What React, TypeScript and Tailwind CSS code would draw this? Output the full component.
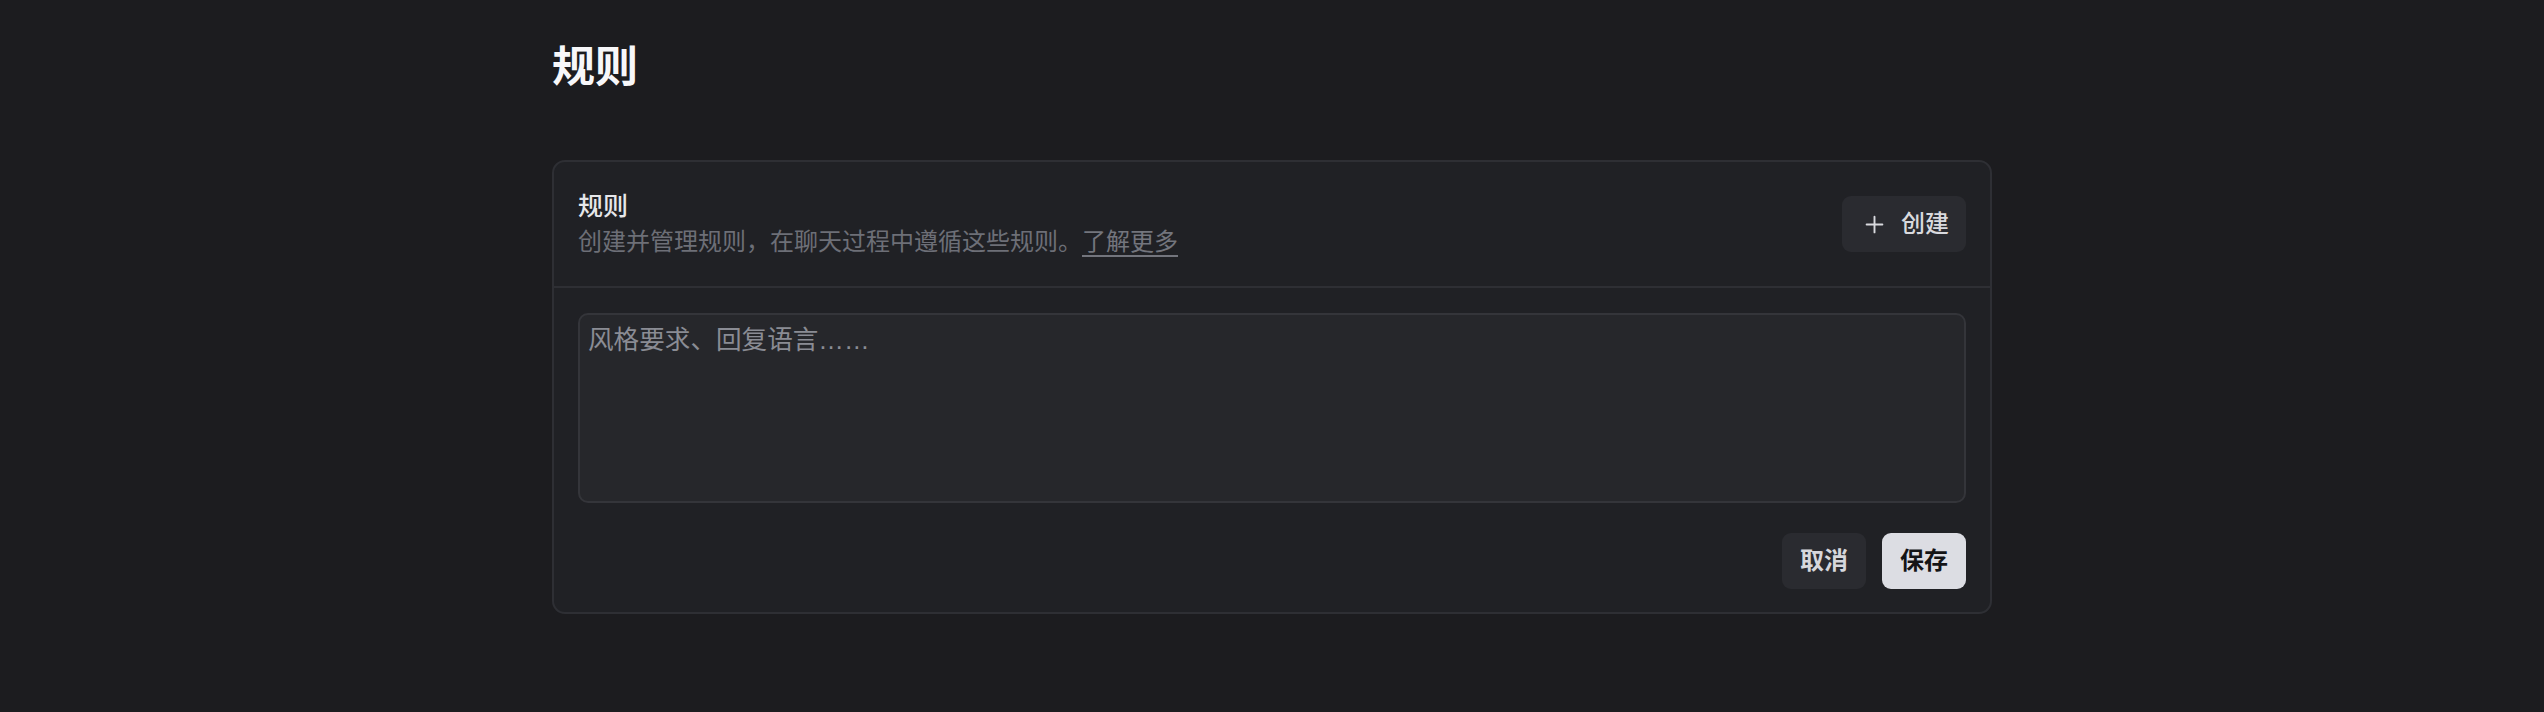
import React, { useState } from 'react'
import { Plus } from 'lucide-react'

export default function App() {
  const [rules, setRules] = useState('')

  return (
    <div
      className="min-h-[712px] w-full bg-[#1c1c1f] text-[#f4f4f6]"
      style={{ fontFamily: '"Liberation Sans", "Noto Sans CJK SC", sans-serif' }}
    >
      <div className="mx-auto w-[1440px] pt-[41px]">
        {/* Page title */}
        <h1 className="text-[43px] leading-[52px] font-bold text-[#f7f7f9]">规则</h1>

        {/* Rules card */}
        <div className="mt-[67px] rounded-[13px] border-2 border-[#2e2f34] bg-[#202125]">
          {/* Header */}
          <div className="flex items-center justify-between px-[24px] py-[26px] border-b-2 border-[#2e2f34]">
            <div className="flex flex-col">
              <span className="text-[25px] leading-[36px] font-medium text-[#e6e7ea]">规则</span>
              <span className="text-[24px] leading-[36px] text-[#6d6f77]">
                创建并管理规则，在聊天过程中遵循这些规则。
                <a href="#" className="underline underline-offset-[5px] decoration-[1.5px] text-[#73757d]">
                  了解更多
                </a>
              </span>
            </div>
            <button className="flex items-center gap-[13px] h-[56px] pl-[19px] pr-[17px] rounded-[9px] bg-[#2a2b30] text-[24px] font-medium text-[#d9dade]">
              <Plus className="w-[27px] h-[27px]" strokeWidth={1.7} />
              <span>创建</span>
            </button>
          </div>

          {/* Body */}
          <div className="flex flex-col px-[24px] pt-[25px] pb-[23px]">
            <textarea
              autoFocus
              value={rules}
              onChange={(e) => setRules(e.target.value)}
              placeholder="风格要求、回复语言……"
              className="h-[190px] w-full resize-none rounded-[10px] border-2 border-[#34353a] bg-[#26272b] px-[8px] py-[6px] text-[25.6px] leading-[38px] text-[#e6e7ea] placeholder:text-[#8a8c94] outline-none"
            />
            <div className="mt-[30px] flex justify-end gap-[16px]">
              <button className="h-[56px] w-[84px] rounded-[9px] bg-[#2a2b30] text-[24px] font-semibold text-[#d6d7dc]">
                取消
              </button>
              <button className="h-[56px] w-[84px] rounded-[9px] bg-[#dcdde3] text-[24px] font-semibold text-[#141416]">
                保存
              </button>
            </div>
          </div>
        </div>
      </div>
    </div>
  )
}
